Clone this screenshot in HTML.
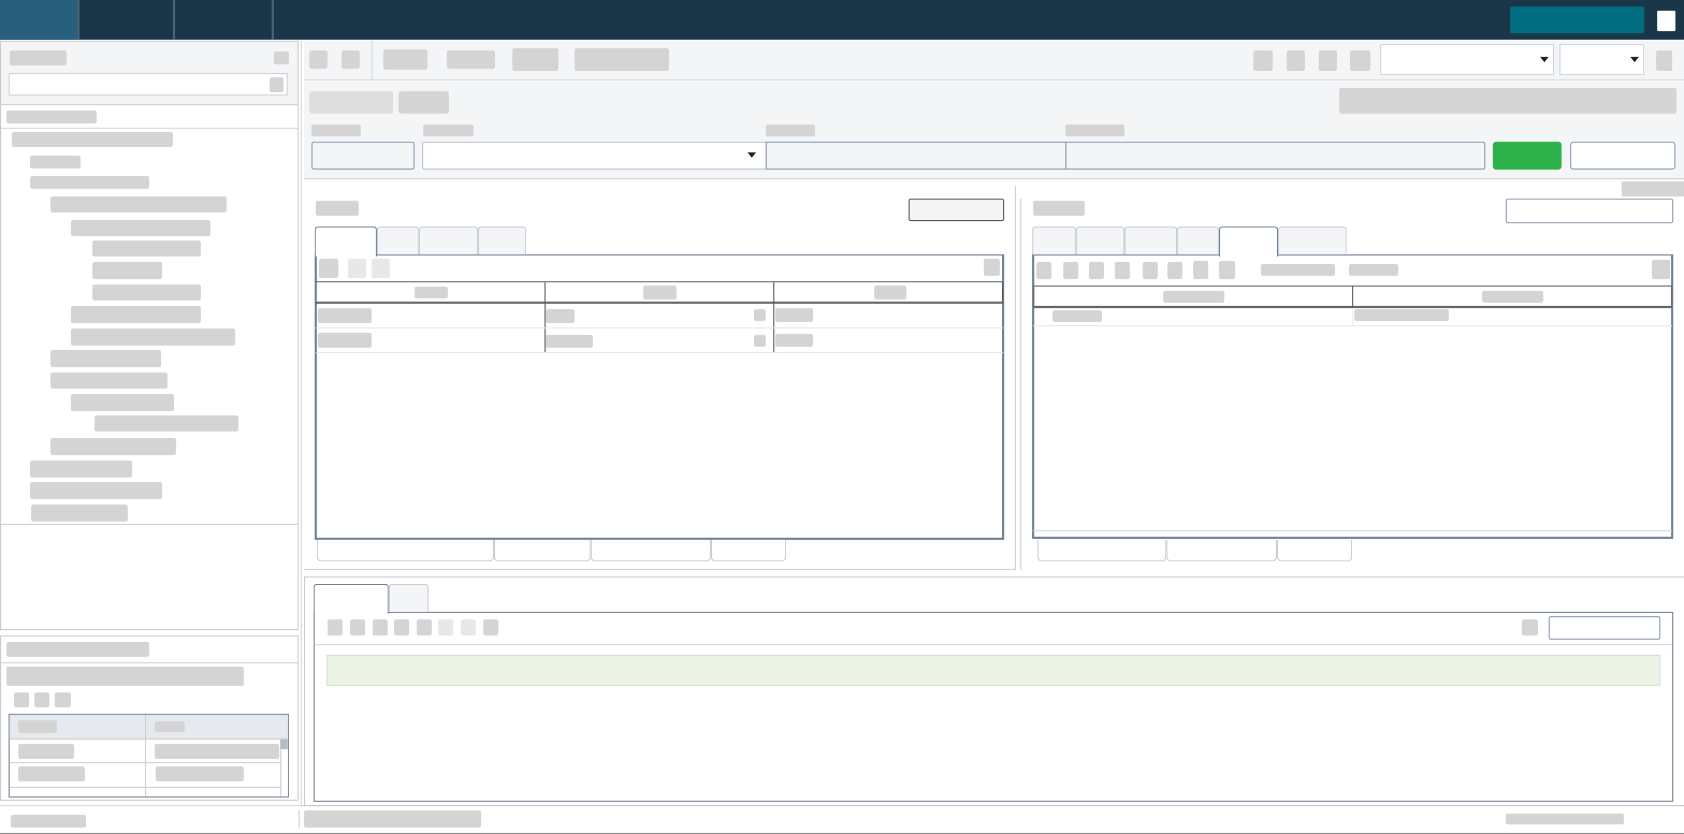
<!DOCTYPE html>
<html><head><meta charset="utf-8"><style>
html,body{margin:0;padding:0;width:1684px;height:834px;overflow:hidden;background:#fff;font-family:"Liberation Sans",sans-serif}
#s{position:absolute;left:0;top:0;width:1568px;height:777px;transform:scale(1.07398,1.0734);transform-origin:0 0}
#s div{position:absolute;box-sizing:border-box}
.g{background:#d4d4d4;border-radius:2px}
.l{background:#e8e8e8;border-radius:2px}
.bx{border:1px solid #c9c9c9}
.dk{border:1px solid #6f7f95}
.tb{background:#f4f5f7;border:1px solid #c7ccd3;border-bottom:none;border-radius:3px 3px 0 0}
.ta{background:#fff;border:1px solid #6f7f95;border-bottom:none;border-radius:3px 3px 0 0}
.bt{background:#fff;border:1px solid #c7ccd3;border-top:none;border-radius:0 0 4px 4px}
.ar{width:0;height:0;border-left:4px solid transparent;border-right:4px solid transparent;border-top:5px solid #222}
</style></head><body><div id="s">
<!-- top bar -->
<div style="left:0;top:0;width:1568px;height:37px;background:#1a3649"></div>
<div style="left:0;top:0;width:72px;height:37px;background:#285f7d"></div>
<div style="left:72px;top:0;width:2px;height:37px;background:#4a6478"></div>
<div style="left:161px;top:0;width:2px;height:37px;background:#4a6478"></div>
<div style="left:253px;top:0;width:2px;height:37px;background:#4a6478"></div>
<div style="left:1406px;top:6px;width:125px;height:25px;background:#006d80;border-radius:2px"></div>
<div style="left:1543px;top:10px;width:17px;height:19px;background:#fff;border-radius:1px"></div>

<!-- left panel -->
<div class="bx" style="left:0;top:38px;width:278px;height:549px"></div>
<div style="left:1px;top:39px;width:276px;height:59px;background:#f4f5f7;border-bottom:1px solid #c9d0d8"></div>
<div class="g" style="left:9px;top:47px;width:53px;height:14px"></div>
<div class="g" style="left:255px;top:48px;width:14px;height:12px"></div>
<div style="left:8px;top:68px;width:260px;height:21px;background:#fff;border:1px solid #ccd2d9"></div>
<div class="g" style="left:251px;top:72px;width:13px;height:14px"></div>
<div class="g" style="left:6px;top:103px;width:84px;height:12px"></div>
<div style="left:1px;top:119px;width:276px;height:1px;background:#d0d7df"></div>
<div class="g" style="left:11px;top:123px;width:150px;height:14px"></div>
<div class="g" style="left:28px;top:145px;width:47px;height:12px"></div>
<div class="g" style="left:28px;top:164px;width:111px;height:12px"></div>
<div class="g" style="left:47px;top:183px;width:164px;height:15px"></div>
<div class="g" style="left:66px;top:205px;width:130px;height:15px"></div>
<div class="g" style="left:86px;top:224px;width:101px;height:15px"></div>
<div class="g" style="left:86px;top:244px;width:65px;height:16px"></div>
<div class="g" style="left:86px;top:265px;width:101px;height:15px"></div>
<div class="g" style="left:66px;top:285px;width:121px;height:16px"></div>
<div class="g" style="left:66px;top:306px;width:153px;height:16px"></div>
<div class="g" style="left:47px;top:326px;width:103px;height:16px"></div>
<div class="g" style="left:47px;top:347px;width:109px;height:15px"></div>
<div class="g" style="left:66px;top:367px;width:96px;height:16px"></div>
<div class="g" style="left:88px;top:387px;width:134px;height:15px"></div>
<div class="g" style="left:47px;top:408px;width:117px;height:16px"></div>
<div class="g" style="left:28px;top:429px;width:95px;height:16px"></div>
<div class="g" style="left:28px;top:449px;width:123px;height:16px"></div>
<div class="g" style="left:29px;top:470px;width:90px;height:16px"></div>
<div style="left:1px;top:488px;width:276px;height:1px;background:#d0d0d0"></div>

<!-- left lower -->
<div class="bx" style="left:0;top:592px;width:278px;height:154px"></div>
<div class="g" style="left:6px;top:598px;width:133px;height:14px"></div>
<div style="left:1px;top:617px;width:276px;height:1px;background:#cfcfcf"></div>
<div class="g" style="left:6px;top:621px;width:221px;height:18px"></div>
<div class="g" style="left:13px;top:645px;width:14px;height:14px"></div>
<div class="g" style="left:32px;top:645px;width:14px;height:14px"></div>
<div class="g" style="left:51px;top:645px;width:15px;height:14px"></div>
<div class="dk" style="left:8px;top:665px;width:261px;height:78px"></div>
<div style="left:9px;top:666px;width:259px;height:23px;background:#e6e9ed;border-bottom:1px solid #c8ccd2"></div>
<div style="left:135px;top:666px;width:1px;height:76px;background:#cfcfcf"></div>
<div class="g" style="left:17px;top:671px;width:36px;height:12px"></div>
<div class="g" style="left:144px;top:672px;width:28px;height:10px"></div>
<div class="g" style="left:17px;top:693px;width:52px;height:14px"></div>
<div class="g" style="left:144px;top:693px;width:116px;height:14px"></div>
<div style="left:9px;top:710px;width:252px;height:1px;background:#cfcfcf"></div>
<div class="g" style="left:17px;top:714px;width:62px;height:14px"></div>
<div class="g" style="left:145px;top:714px;width:82px;height:14px"></div>
<div style="left:9px;top:733px;width:252px;height:1px;background:#cfcfcf"></div>
<div style="left:261px;top:689px;width:7px;height:53px;border-left:1px solid #c8ccd2;background:#fff"></div>
<div style="left:261px;top:689px;width:7px;height:9px;background:#b4bcc8"></div>

<!-- splitter -->
<div style="left:280px;top:38px;width:1px;height:712px;background:#d4d4d4"></div>
<div style="left:0;top:750px;width:1568px;height:1px;background:#d4d4d4"></div>
<div style="left:0;top:776px;width:1568px;height:1px;background:#888"></div>
<div class="g" style="left:10px;top:759px;width:70px;height:12px"></div>
<div style="left:278px;top:755px;width:1px;height:16px;background:#ccc"></div>
<div class="g" style="left:283px;top:755px;width:165px;height:16px"></div>
<div class="g" style="left:1402px;top:758px;width:110px;height:10px"></div>

<!-- toolbar -->
<div style="left:283px;top:38px;width:1285px;height:37px;background:#f4f5f7;border-bottom:1px solid #cfd6de"></div>
<div class="g" style="left:288px;top:47px;width:17px;height:17px"></div>
<div class="g" style="left:318px;top:47px;width:17px;height:17px"></div>
<div style="left:346px;top:38px;width:1px;height:37px;background:#d4d8dd"></div>
<div class="g" style="left:357px;top:46px;width:41px;height:19px"></div>
<div class="g" style="left:416px;top:47px;width:45px;height:17px"></div>
<div class="g" style="left:477px;top:45px;width:43px;height:21px"></div>
<div class="g" style="left:535px;top:45px;width:88px;height:21px"></div>
<div class="g" style="left:1167px;top:47px;width:18px;height:19px"></div>
<div class="g" style="left:1198px;top:47px;width:17px;height:19px"></div>
<div class="g" style="left:1228px;top:47px;width:17px;height:19px"></div>
<div class="g" style="left:1257px;top:47px;width:19px;height:19px"></div>
<div style="left:1285px;top:41px;width:162px;height:29px;background:#fff;border:1px solid #d0d5dc"></div>
<div class="ar" style="left:1434px;top:53px"></div>
<div style="left:1452px;top:41px;width:79px;height:29px;background:#fff;border:1px solid #d0d5dc"></div>
<div class="ar" style="left:1518px;top:53px"></div>
<div class="g" style="left:1542px;top:47px;width:15px;height:19px"></div>

<!-- filter area -->
<div style="left:283px;top:76px;width:1285px;height:91px;background:#f4f5f7;border-bottom:1px solid #cfcfcf"></div>
<div style="left:288px;top:85px;width:78px;height:21px;background:#dedede;border-radius:3px"></div>
<div class="g" style="left:371px;top:85px;width:47px;height:21px;border-radius:3px"></div>
<div class="g" style="left:1247px;top:82px;width:314px;height:24px"></div>
<div class="g" style="left:290px;top:116px;width:46px;height:11px"></div>
<div class="g" style="left:394px;top:116px;width:47px;height:11px"></div>
<div class="g" style="left:713px;top:116px;width:46px;height:11px"></div>
<div class="g" style="left:992px;top:116px;width:55px;height:11px"></div>
<div style="left:290px;top:132px;width:96px;height:26px;background:#f4f5f7;border:1px solid #8a9ab0;border-radius:2px"></div>
<div style="left:393px;top:132px;width:321px;height:26px;background:#fff;border:1px solid #b8c2cf;border-radius:2px 0 0 2px"></div>
<div class="ar" style="left:696px;top:142px"></div>
<div style="left:713px;top:132px;width:280px;height:26px;border:1px solid #8a9ab0;background:#f4f5f7"></div>
<div style="left:992px;top:132px;width:391px;height:26px;border:1px solid #8a9ab0;background:#f4f5f7;border-radius:0 2px 2px 0"></div>
<div style="left:1390px;top:132px;width:64px;height:26px;background:#2db14b;border-radius:3px"></div>
<div style="left:1462px;top:132px;width:98px;height:26px;background:#fff;border:1px solid #8a9ab0;border-radius:3px"></div>
<div class="g" style="left:1510px;top:169px;width:58px;height:14px;border-radius:0"></div>

<!-- middle left panel -->
<div style="left:283px;top:173px;width:663px;height:358px;border-right:1px solid #cfcfcf;border-bottom:1px solid #cfcfcf"></div>
<div style="left:950px;top:185px;width:1px;height:346px;background:#cfcfcf"></div>
<div class="g" style="left:294px;top:187px;width:40px;height:14px"></div>
<div style="left:846px;top:185px;width:89px;height:21px;background:#f4f5f7;border:1px solid #555;border-radius:2px"></div>
<div class="dk" style="left:293px;top:237px;width:642px;height:266px;border-width:1px 2px 2px 2px"></div>
<div class="ta" style="left:293px;top:211px;width:58px;height:28px"></div>
<div class="tb" style="left:351px;top:211px;width:39px;height:26px"></div>
<div class="tb" style="left:390px;top:211px;width:55px;height:26px"></div>
<div class="tb" style="left:445px;top:211px;width:45px;height:26px"></div>
<div class="g" style="left:297px;top:241px;width:18px;height:18px"></div>
<div class="l" style="left:324px;top:241px;width:17px;height:18px"></div>
<div class="l" style="left:346px;top:241px;width:17px;height:18px"></div>
<div class="g" style="left:916px;top:241px;width:15px;height:16px"></div>
<div style="left:294px;top:262px;width:640px;height:21px;border-top:1px solid #666;border-bottom:2px solid #666"></div>
<div style="left:507px;top:263px;width:1px;height:65px;background:#555"></div>
<div style="left:720px;top:263px;width:1px;height:65px;background:#555"></div>
<div style="left:933px;top:263px;width:1px;height:19px;background:#555"></div>
<div style="left:508px;top:283px;width:1px;height:45px;background:#eee"></div>
<div style="left:721px;top:283px;width:1px;height:45px;background:#eee"></div>
<div class="g" style="left:386px;top:267px;width:31px;height:11px"></div>
<div class="g" style="left:599px;top:266px;width:31px;height:13px"></div>
<div class="g" style="left:814px;top:266px;width:30px;height:13px"></div>
<div class="g" style="left:296px;top:287px;width:50px;height:14px"></div>
<div class="g" style="left:508px;top:288px;width:27px;height:13px"></div>
<div class="g" style="left:702px;top:288px;width:11px;height:11px"></div>
<div class="g" style="left:722px;top:287px;width:35px;height:13px"></div>
<div style="left:294px;top:305px;width:640px;height:1px;background:#e6e6e6"></div>
<div class="g" style="left:296px;top:310px;width:50px;height:14px"></div>
<div class="g" style="left:508px;top:312px;width:44px;height:12px"></div>
<div class="g" style="left:702px;top:312px;width:11px;height:11px"></div>
<div class="g" style="left:722px;top:311px;width:35px;height:12px"></div>
<div style="left:294px;top:328px;width:640px;height:1px;background:#e6e6e6"></div>
<div class="bt" style="left:295px;top:503px;width:165px;height:20px"></div>
<div class="bt" style="left:460px;top:503px;width:90px;height:20px"></div>
<div class="bt" style="left:550px;top:503px;width:112px;height:20px"></div>
<div class="bt" style="left:662px;top:503px;width:70px;height:20px"></div>

<!-- middle right panel -->
<div class="g" style="left:962px;top:187px;width:48px;height:14px"></div>
<div style="left:1402px;top:185px;width:156px;height:23px;background:#fff;border:1px solid #8a9ab0;border-radius:2px"></div>
<div class="dk" style="left:961px;top:237px;width:597px;height:265px;border-width:1px 2px 2px 2px"></div>
<div class="tb" style="left:961px;top:211px;width:41px;height:26px"></div>
<div class="tb" style="left:1002px;top:211px;width:45px;height:26px"></div>
<div class="tb" style="left:1047px;top:211px;width:49px;height:26px"></div>
<div class="tb" style="left:1096px;top:211px;width:39px;height:26px"></div>
<div class="ta" style="left:1135px;top:211px;width:55px;height:28px"></div>
<div class="tb" style="left:1190px;top:211px;width:64px;height:26px"></div>
<div class="g" style="left:965px;top:244px;width:14px;height:16px"></div>
<div class="g" style="left:990px;top:244px;width:14px;height:16px"></div>
<div class="g" style="left:1014px;top:244px;width:14px;height:16px"></div>
<div class="g" style="left:1038px;top:244px;width:14px;height:16px"></div>
<div class="g" style="left:1064px;top:244px;width:14px;height:16px"></div>
<div class="g" style="left:1087px;top:244px;width:14px;height:16px"></div>
<div class="g" style="left:1111px;top:243px;width:14px;height:17px"></div>
<div class="g" style="left:1135px;top:243px;width:15px;height:17px"></div>
<div class="g" style="left:1174px;top:246px;width:69px;height:11px"></div>
<div class="g" style="left:1256px;top:246px;width:46px;height:11px"></div>
<div class="g" style="left:1538px;top:242px;width:17px;height:18px"></div>
<div style="left:962px;top:266px;width:595px;height:21px;border-top:1px solid #666;border-bottom:2px solid #666;border-left:1px solid #666;border-right:1px solid #666"></div>
<div style="left:1259px;top:266px;width:1px;height:20px;background:#555"></div>
<div style="left:1259px;top:287px;width:1px;height:16px;background:#eee"></div>
<div class="g" style="left:1083px;top:271px;width:57px;height:11px"></div>
<div class="g" style="left:1380px;top:271px;width:57px;height:11px"></div>
<div class="g" style="left:980px;top:289px;width:46px;height:11px"></div>
<div class="g" style="left:1261px;top:288px;width:88px;height:11px"></div>
<div style="left:962px;top:303px;width:595px;height:1px;background:#e6e6e6"></div>
<div style="left:962px;top:494px;width:595px;height:1px;background:#d0d5dc"></div>
<div class="bt" style="left:966px;top:503px;width:120px;height:20px"></div>
<div class="bt" style="left:1086px;top:503px;width:103px;height:20px"></div>
<div class="bt" style="left:1189px;top:503px;width:70px;height:20px"></div>

<!-- bottom panel -->
<div class="bx" style="left:283px;top:537px;width:1290px;height:214px;border-right:none"></div>
<div class="dk" style="left:292px;top:570px;width:1266px;height:177px"></div>
<div class="ta" style="left:292px;top:544px;width:70px;height:28px"></div>
<div class="tb" style="left:362px;top:544px;width:37px;height:26px"></div>
<div class="g" style="left:305px;top:577px;width:14px;height:15px"></div>
<div class="g" style="left:326px;top:577px;width:14px;height:15px"></div>
<div class="g" style="left:347px;top:577px;width:14px;height:15px"></div>
<div class="g" style="left:367px;top:577px;width:14px;height:15px"></div>
<div class="g" style="left:388px;top:577px;width:14px;height:15px"></div>
<div class="l" style="left:408px;top:577px;width:14px;height:15px"></div>
<div class="l" style="left:429px;top:577px;width:14px;height:15px"></div>
<div class="g" style="left:450px;top:577px;width:14px;height:15px"></div>
<div class="g" style="left:1417px;top:577px;width:15px;height:15px"></div>
<div style="left:1442px;top:574px;width:104px;height:22px;background:#fff;border:1px solid #8a9ab0;border-radius:2px"></div>
<div style="left:293px;top:600px;width:1264px;height:1px;background:#d6dbe1"></div>
<div style="left:304px;top:610px;width:1242px;height:29px;background:#ebf3e4;border:1px solid #d5dfd0"></div>
</div></body></html>
